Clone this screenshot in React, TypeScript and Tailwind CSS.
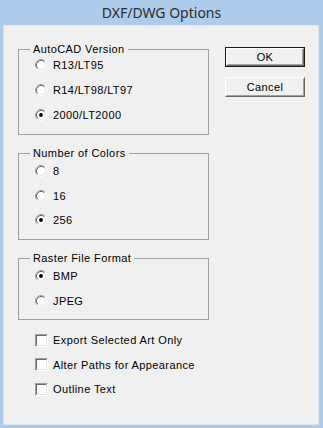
const font = { fontFamily: '"Liberation Sans", Arial, sans-serif' };

const Radio = ({ checked }: { checked?: boolean }) => (
  <svg width="12" height="12" viewBox="0 0 12 12" className="shrink-0">
    <circle cx="6" cy="6" r="4.5" fill="#fff" />
    <path d="M2.11 9.89 A5.5 5.5 0 0 1 9.89 2.11" fill="none" stroke="#a0a0a0" strokeWidth="1" />
    <path d="M9.89 2.11 A5.5 5.5 0 0 1 2.11 9.89" fill="none" stroke="#ffffff" strokeWidth="1" />
    <path d="M2.82 9.18 A4.5 4.5 0 0 1 9.18 2.82" fill="none" stroke="#696969" strokeWidth="1" />
    <path d="M9.18 2.82 A4.5 4.5 0 0 1 2.82 9.18" fill="none" stroke="#e3e3e3" strokeWidth="1" />
    {checked && <circle cx="6" cy="6" r="1.9" fill="#000" />}
  </svg>
);

const RadioRow = ({ label, checked }: { label: string; checked?: boolean }) => (
  <div className="h-[18px] flex items-center gap-[6px]">
    <Radio checked={checked} />
    <span className="text-[11px] leading-[14px] tracking-[0.4px] text-black">{label}</span>
  </div>
);

const CheckRow = ({ label }: { label: string }) => (
  <div className="h-[18px] flex items-center gap-[5px] ml-[17px]">
    <div className="w-[13px] h-[13px] flex border border-t-[#a0a0a0] border-l-[#a0a0a0] border-r-white border-b-white">
      <div className="flex-1 bg-white border border-t-[#696969] border-l-[#696969] border-r-[#e3e3e3] border-b-[#e3e3e3]"></div>
    </div>
    <span className="text-[11px] leading-[14px] tracking-[0.4px] text-black">{label}</span>
  </div>
);

const Group = ({ title, children, className }: { title: string; children: React.ReactNode; className?: string }) => (
  <fieldset className={"border border-[#a0a0a0] p-0 m-0 " + (className ?? "")}>
    <legend className="ml-[11px] px-[3px] text-[11px] leading-[14px] tracking-[0.4px] text-black">{title}</legend>
    {children}
  </fieldset>
);

const Button = ({ label, isDefault }: { label: string; isDefault?: boolean }) => {
  const inner = (
    <div className="flex-1 flex border border-t-white border-l-white border-r-[#696969] border-b-[#696969]">
      <div className="flex-1 flex items-center justify-center border border-t-[#f0f0f0] border-l-[#f0f0f0] border-r-[#a0a0a0] border-b-[#a0a0a0] text-[11px] tracking-[0.4px] text-black">
        {label}
      </div>
    </div>
  );
  if (isDefault) {
    return <div className="w-[80px] h-[20px] flex border border-[#1a1a1a]">{inner}</div>;
  }
  return <div className="w-[80px] h-[20px] flex">{inner}</div>;
};

export default function App() {
  return (
    <div className="w-[323px] h-[428px] bg-[#adcbeb] flex flex-col" style={font}>
      <div className="h-[25px] flex items-center justify-center">
        <span
          className="text-[14px] text-[#2b2b2b] pb-[1px]"
          style={{ fontFamily: '"Noto Sans", "Open Sans", sans-serif' }}
        >
          DXF/DWG Options
        </span>
      </div>
      <div className="ml-[3px] mr-[4px] mb-[3px] flex-1 bg-[#f0f0f0] border border-[#dbe6f3] flex">
        <div className="ml-[14px] mt-[16px] w-[191px] flex flex-col">
          <Group title="AutoCAD Version">
            <div className="flex flex-col gap-[7px] pl-[16px] pb-[10px]">
              <RadioRow label="R13/LT95" />
              <RadioRow label="R14/LT98/LT97" />
              <RadioRow label="2000/LT2000" checked />
            </div>
          </Group>
          <Group title="Number of Colors" className="mt-[11px]">
            <div className="flex flex-col gap-[6.5px] pl-[16px] pt-[2px] pb-[10px]">
              <RadioRow label="8" />
              <RadioRow label="16" />
              <RadioRow label="256" checked />
            </div>
          </Group>
          <Group title="Raster File Format" className="mt-[11px]">
            <div className="flex flex-col gap-[7px] pl-[16px] pt-[2px] pb-[9px]">
              <RadioRow label="BMP" checked />
              <RadioRow label="JPEG" />
            </div>
          </Group>
          <div className="mt-[11px] flex flex-col gap-[6.5px]">
            <CheckRow label="Export Selected Art Only" />
            <CheckRow label="Alter Paths for Appearance" />
            <CheckRow label="Outline Text" />
          </div>
        </div>
        <div className="ml-[16px] pt-[21px] flex flex-col gap-[10px]">
          <Button label="OK" isDefault />
          <Button label="Cancel" />
        </div>
      </div>
    </div>
  );
}
